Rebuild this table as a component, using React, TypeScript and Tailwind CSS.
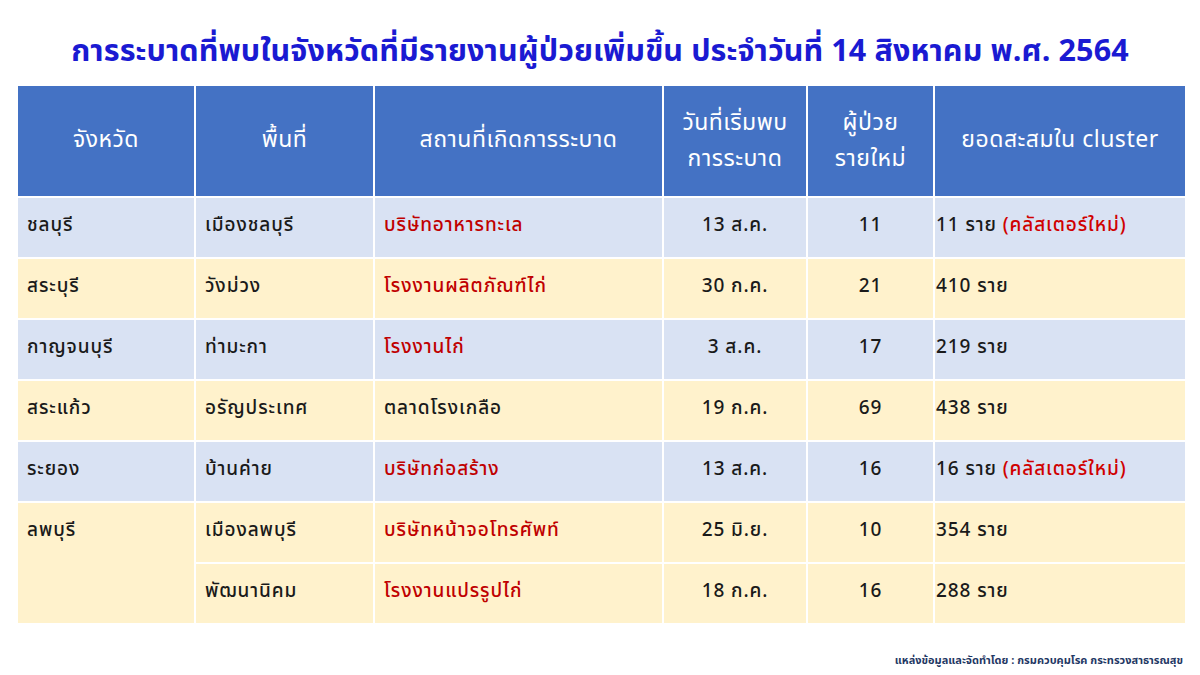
import React from "react";

type Row = {
  prov: string;
  area: string;
  place: string;
  placeRed: boolean;
  date: string;
  count: string;
  total: string;
  isNew?: boolean;
  bg: "blue" | "yellow";
  rowSpanProv?: number;
  skipProv?: boolean;
  faintTop?: boolean;
};

const rows: Row[] = [
  { prov: "ชลบุรี", area: "เมืองชลบุรี", place: "บริษัทอาหารทะเล", placeRed: true, date: "13 ส.ค.", count: "11", total: "11 ราย", isNew: true, bg: "blue" },
  { prov: "สระบุรี", area: "วังม่วง", place: "โรงงานผลิตภัณฑ์ไก่", placeRed: true, date: "30 ก.ค.", count: "21", total: "410 ราย", bg: "yellow" },
  { prov: "กาญจนบุรี", area: "ท่ามะกา", place: "โรงงานไก่", placeRed: true, date: "3 ส.ค.", count: "17", total: "219 ราย", bg: "blue" },
  { prov: "สระแก้ว", area: "อรัญประเทศ", place: "ตลาดโรงเกลือ", placeRed: false, date: "19 ก.ค.", count: "69", total: "438 ราย", bg: "yellow" },
  { prov: "ระยอง", area: "บ้านค่าย", place: "บริษัทก่อสร้าง", placeRed: true, date: "13 ส.ค.", count: "16", total: "16 ราย", isNew: true, bg: "blue" },
  { prov: "ลพบุรี", area: "เมืองลพบุรี", place: "บริษัทหน้าจอโทรศัพท์", placeRed: true, date: "25 มิ.ย.", count: "10", total: "354 ราย", bg: "yellow", rowSpanProv: 2 },
  { prov: "", area: "พัฒนานิคม", place: "โรงงานแปรรูปไก่", placeRed: true, date: "18 ก.ค.", count: "16", total: "288 ราย", bg: "yellow", skipProv: true, faintTop: true },
];

const font = { fontFamily: "Tahoma, 'Noto Sans Thai', 'Loma', 'Garuda', 'Liberation Sans', sans-serif" };

export default function App() {
  return (
    <div className="w-[1200px] h-[675px] bg-white relative overflow-hidden" style={font}>
      <div className="pt-[32px] h-[84px] text-center text-[30.5px] font-bold text-[#1a1ad2] leading-[40px] tracking-[0.1px]">
        การระบาดที่พบในจังหวัดที่มีรายงานผู้ป่วยเพิ่มขึ้น ประจำวันที่ 14 สิงหาคม พ.ศ. 2564
      </div>
      <div className="pl-[16px]">
        <table className="border-collapse table-fixed w-[1169px]">
          <colgroup>
            <col className="w-[178px]" />
            <col className="w-[179px]" />
            <col className="w-[289px]" />
            <col className="w-[144px]" />
            <col className="w-[127px]" />
            <col className="w-[252px]" />
          </colgroup>
          <thead>
            <tr className="h-[112px] bg-[#4472c4] text-white text-[23px] leading-[36px] tracking-[0.5px]">
              <th className="border-2 border-white font-normal text-center align-middle pb-[2px]">จังหวัด</th>
              <th className="border-2 border-white font-normal text-center align-middle pb-[2px]">พื้นที่</th>
              <th className="border-2 border-white font-normal text-center align-middle pb-[2px]">สถานที่เกิดการระบาด</th>
              <th className="border-2 border-white font-normal text-center align-middle">วันที่เริ่มพบ<br />การระบาด</th>
              <th className="border-2 border-white font-normal text-center align-middle">ผู้ป่วย<br />รายใหม่</th>
              <th className="border-2 border-white font-normal text-center align-middle pb-[2px]">ยอดสะสมใน cluster</th>
            </tr>
          </thead>
          <tbody className="text-[19px] leading-[28px] text-[#1a1a1a] tracking-[0.9px] font-medium">
            {rows.map((r, i) => {
              const bg = r.bg === "blue" ? "bg-[#d9e2f3]" : "bg-[#fff2cc]";
              const top = r.faintTop ? "border-t-[#fdf7e4]" : "";
              return (
                <tr key={i} className={`h-[61px] ${bg}`}>
                  {!r.skipProv && (
                    <td rowSpan={r.rowSpanProv} className="border-2 border-white pl-[9px] align-top pt-[14px]">{r.prov}</td>
                  )}
                  <td className={`border-2 border-white ${top} pl-[9px] align-top pt-[14px]`}>{r.area}</td>
                  <td className={`border-2 border-white ${top} pl-[9px] align-top pt-[14px] ${r.placeRed ? "text-[#c00000]" : ""}`}>{r.place}</td>
                  <td className={`border-2 border-white ${top} text-center align-top pt-[14px]`}>{r.date}</td>
                  <td className={`border-2 border-white ${top} text-center align-top pt-[14px]`}>{r.count}</td>
                  <td className={`border-2 border-white ${top} pl-[1px] align-top pt-[14px]`}>
                    {r.total}
                    {r.isNew && <span className="text-[#d00000]"> (คลัสเตอร์ใหม่)</span>}
                  </td>
                </tr>
              );
            })}
          </tbody>
        </table>
      </div>
      <div className="absolute right-[17px] top-[653px] text-[11px] font-bold text-[#1f3864]">
        แหล่งข้อมูลและจัดทำโดย : กรมควบคุมโรค กระทรวงสาธารณสุข
      </div>
    </div>
  );
}
